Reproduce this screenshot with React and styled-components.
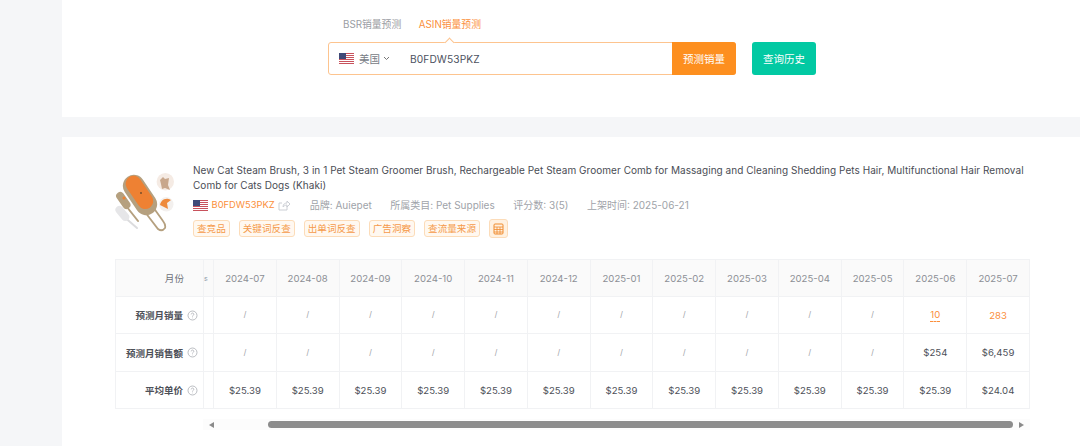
import React from "react";
import styled, { createGlobalStyle } from "styled-components";

const GlobalStyle = createGlobalStyle`
  html, body {
    margin: 0;
    padding: 0;
    background: #f5f6f8;
    overflow: hidden;
  }
  body {
    font-family: Inter, "Noto Sans CJK SC", sans-serif;
    -webkit-font-smoothing: antialiased;
  }
`;

const months = [
  "2024-07", "2024-08", "2024-09", "2024-10", "2024-11", "2024-12", "2025-01",
  "2025-02", "2025-03", "2025-04", "2025-05", "2025-06", "2025-07",
];

const rows = [
  { label: "预测月销量", cells: [...Array(11).fill("/"), "10", "283"] },
  { label: "预测月销售额", cells: [...Array(11).fill("/"), "$254", "$6,459"] },
  { label: "平均单价", cells: [...Array(12).fill("$25.39"), "$24.04"] },
];

const tags = ["查竞品", "关键词反查", "出单词反查", "广告洞察", "查流量来源"];

function Flag() {
  return (
    <svg width="15" height="11" viewBox="0 0 15 11">
      <rect width="15" height="11" fill="#fff" />
      {[0, 2, 4, 6, 8, 10].map((y) => (
        <rect key={y} y={y} width="15" height="1" fill="#c8525c" />
      ))}
      <rect width="7" height="6" fill="#3f4a78" />
    </svg>
  );
}

function BrushPicture() {
  return (
    <svg width="60" height="62" viewBox="0 0 60 62">
      <circle cx="50.3" cy="10.7" r="8.7" fill="#f5ebe4" />
      <path d="M45 9l3-3 2 2 4-1-1 7 2 5-5-2-3 1-1-5z" fill="#c8a78c" />
      <circle cx="51.3" cy="33.3" r="7.2" fill="#f3f0ee" />
      <path d="M45 34a7 7 0 0 1 11-5l-4 3 1 6-4-2z" fill="#ee8a3c" />
      <path d="M30 41L43 58Q47 61 50 57Q51 54 48 50L38 36" stroke="#b5a07f" strokeWidth="1.8" fill="none" />
      <rect x="14" y="2" width="22" height="44" rx="11" fill="#b5a07f" transform="rotate(-34 25 24)" />
      <rect x="18" y="3" width="16" height="37" rx="8" fill="#ee8133" transform="rotate(-34 25 24)" />
      <circle cx="26" cy="22" r="0.9" fill="#6b4a2a" />
      <path d="M8 31L23 50" stroke="#b5a07f" strokeWidth="2" strokeLinecap="round" />
      <rect x="4" y="20" width="8" height="19" rx="4" fill="#b5a07f" transform="rotate(-35 8 29)" />
      <circle cx="9" cy="27" r="1.5" fill="#ee8133" />
      <path d="M7 44L22 57" stroke="#dcdcde" strokeWidth="2" strokeLinecap="round" />
      <rect x="3" y="34" width="8" height="17" rx="4" fill="#e6e6e8" transform="rotate(-40 7 42)" />
    </svg>
  );
}

function HelpIcon() {
  return (
    <HelpMark viewBox="0 0 12 12">
      <circle cx="6" cy="6" r="4.9" fill="none" stroke="#a3a6ad" strokeWidth="0.8" />
      <path d="M4.6 4.8a1.4 1.4 0 1 1 2.2 1.1c-.5.4-.8.6-.8 1.2" fill="none" stroke="#a3a6ad" strokeWidth="0.8" />
      <circle cx="6" cy="8.6" r="0.5" fill="#a3a6ad" />
    </HelpMark>
  );
}

export default function App() {
  return (
    <Page>
      <GlobalStyle />
      <SearchCard>
        <Tabs>
          <Tab>BSR销量预测</Tab>
          <Tab $active>ASIN销量预测</Tab>
        </Tabs>
        <SearchRow>
          <SearchBox>
            <Country>
              <Flag />
              <span>美国</span>
              <svg width="7" height="5" viewBox="0 0 7 5">
                <path d="M1 1l2.5 2.5L6 1" fill="none" stroke="#777" strokeWidth="1" />
              </svg>
            </Country>
            <AsinText>B0FDW53PKZ</AsinText>
            <PredictButton>预测销量</PredictButton>
          </SearchBox>
          <HistoryButton>查询历史</HistoryButton>
        </SearchRow>
      </SearchCard>

      <ResultCard>
        <Product>
          <BrushPicture />
          <ProductInfo>
            <Title>
              New Cat Steam Brush, 3 in 1 Pet Steam Groomer Brush, Rechargeable Pet Steam Groomer Comb for Massaging and Cleaning Shedding Pets Hair, Multifunctional Hair Removal Comb for Cats Dogs (Khaki)
            </Title>
            <Meta>
              <AsinGroup>
                <Flag />
                <AsinLink>B0FDW53PKZ</AsinLink>
                <svg width="12" height="11" viewBox="0 0 12 11">
                  <path d="M9 6v4H1V3h3M5 7c0-3 2-4 4-4V1l3 3-3 3V5C7 5 6 6 5 7z" fill="none" stroke="#c6cad0" strokeWidth="0.9" />
                </svg>
              </AsinGroup>
              <span>品牌: Auiepet</span>
              <span>所属类目: Pet Supplies</span>
              <span>评分数: 3(5)</span>
              <span>上架时间: 2025-06-21</span>
            </Meta>
            <TagRow>
              {tags.map((t) => (
                <Tag key={t}>{t}</Tag>
              ))}
              <CalcTag>
                <svg width="11" height="12" viewBox="0 0 11 12">
                  <rect x="1" y="1" width="9" height="10" rx="1" fill="none" stroke="#f08c2e" strokeWidth="1" />
                  <path d="M1 4h9M1 6.5h9M1 9h9M4 4v7M7 4v7" stroke="#f08c2e" strokeWidth="0.8" />
                </svg>
              </CalcTag>
            </TagRow>
          </ProductInfo>
        </Product>

        <Table>
          <HeadCell $label>月份</HeadCell>
          <HeadCell $sliver>
            <CutText>s</CutText>
          </HeadCell>
          {months.map((m) => (
            <HeadCell key={m}>{m}</HeadCell>
          ))}
          {rows.map((row) => (
            <React.Fragment key={row.label}>
              <RowLabel>
                {row.label}
                <HelpIcon />
              </RowLabel>
              <Cell $sliver />
              {row.cells.map((c, i) => (
                <Cell key={i} $empty={c === "/"} $hot={row.label === "预测月销量" && c !== "/"}>
                  {c === "10" ? <Dashed>{c}</Dashed> : c}
                </Cell>
              ))}
            </React.Fragment>
          ))}
        </Table>

        <ScrollBar>
          <Arrow $left />
          <Thumb />
          <Arrow />
        </ScrollBar>
      </ResultCard>
    </Page>
  );
}

const Page = styled.div`
  display: flex;
  flex-direction: column;
  gap: 20px;
  height: 446px;
  padding-left: 62px;
  box-sizing: border-box;
  overflow: hidden;
`;

const SearchCard = styled.section`
  background: #fff;
  height: 117px;
  flex: none;
  display: flex;
  flex-direction: column;
  align-items: center;
  box-sizing: border-box;
  padding: 18px 0 0 2px;
`;

const Tabs = styled.div`
  display: flex;
  gap: 17.5px;
  width: 488px;
  padding-left: 15px;
  box-sizing: border-box;
  height: 24px;
`;

const Tab = styled.div`
  font-size: 9.8px;
  line-height: 13px;
  color: ${(p) => (p.$active ? "#fb8f3c" : "#9a9da3")};
`;

const SearchRow = styled.div`
  display: flex;
  gap: 16px;
  width: 488px;
`;

const SearchBox = styled.div`
  position: relative;
  display: flex;
  align-items: center;
  width: 408px;
  height: 33px;
  box-sizing: border-box;
  border: 1px solid #fdc48f;
  border-radius: 3px;
  background: #fff;

  &::before {
    content: "";
    position: absolute;
    top: -4px;
    left: 117px;
    width: 6px;
    height: 6px;
    background: #fff;
    border-left: 1px solid #fdc48f;
    border-top: 1px solid #fdc48f;
    transform: rotate(45deg);
  }
`;

const Country = styled.div`
  display: flex;
  align-items: center;
  gap: 5px;
  width: 81px;
  padding-left: 10px;
  box-sizing: border-box;
  font-size: 10.5px;
  color: #777b84;
  flex: none;

  svg:last-child {
    margin-left: -2px;
  }
`;

const AsinText = styled.div`
  flex: 1;
  font-size: 10.2px;
  color: #4c5160;
  letter-spacing: 0.1px;
`;

const PredictButton = styled.button`
  width: 64px;
  height: 33px;
  margin: -1px -1px -1px 0;
  border: 0;
  padding: 0;
  border-radius: 0 3px 3px 0;
  background: #fd8f1f;
  color: #fff;
  font: inherit;
  font-size: 10.5px;
`;

const HistoryButton = styled.button`
  width: 64px;
  height: 33px;
  border: 0;
  padding: 0;
  border-radius: 3px;
  background: #02c9a3;
  color: #fff;
  font: inherit;
  font-size: 10.5px;
`;

const ResultCard = styled.section`
  flex: 1;
  background: #fff;
  padding: 26px 50px 0 53px;
  min-height: 0;
`;

const Product = styled.div`
  display: flex;
  gap: 18px;
  height: 96px;
  box-sizing: border-box;
  padding-top: 2px;

  > svg {
    flex: none;
    margin-top: 6px;
  }
`;

const ProductInfo = styled.div`
  min-width: 0;
  margin-top: -2px;
`;

const Title = styled.div`
  font-size: 10px;
  line-height: 15px;
  color: #4a4d55;
  letter-spacing: 0.04px;
`;

const Meta = styled.div`
  display: flex;
  align-items: center;
  gap: 18.5px;
  margin-top: 5px;
  font-size: 10px;
  line-height: 14px;
  color: #a0a3a9;
`;

const AsinGroup = styled.div`
  display: flex;
  align-items: center;
  gap: 3.5px;
  margin-right: 1px;
`;

const AsinLink = styled.span`
  color: #fb8f3c;
  font-size: 9.4px;
`;

const TagRow = styled.div`
  display: flex;
  align-items: center;
  gap: 9px;
  margin-top: 7px;
`;

const Tag = styled.span`
  display: inline-flex;
  align-items: center;
  height: 15px;
  padding: 0 3px;
  border: 1px solid #fcdcb9;
  border-radius: 3px;
  background: #fff8f0;
  color: #f59a4a;
  font-size: 9.6px;
  line-height: 1;
`;

const CalcTag = styled(Tag)`
  height: 17px;
  padding: 0 3px;
  justify-content: center;
  background: #fff1e0;
`;

const Table = styled.div`
  display: grid;
  grid-template-columns: 88px 10px repeat(13, 1fr);
  grid-template-rows: 37px 37px 38px 37px;
  border-top: 1px solid #f1f2f4;
  border-left: 1px solid #f1f2f4;
  width: 915px;
  box-sizing: border-box;
`;

const HeadCell = styled.div`
  display: flex;
  align-items: center;
  justify-content: ${(p) => (p.$label ? "flex-end" : p.$sliver ? "flex-start" : "center")};
  padding-right: ${(p) => (p.$label ? "19px" : "0")};
  background: #fafafa;
  border-right: 1px solid #f1f2f4;
  border-bottom: 1px solid #f1f2f4;
  font-size: 9.6px;
  color: ${(p) => (p.$label ? "#6d7078" : "#8d9096")};
  overflow: hidden;
`;

const CutText = styled.span`
  color: #8a9aa8;
  font-size: 7px;
`;

const RowLabel = styled.div`
  display: flex;
  align-items: center;
  justify-content: flex-end;
  gap: 4px;
  padding-right: 5px;
  border-right: 1px solid #f1f2f4;
  border-bottom: 1px solid #f1f2f4;
  font-size: 9.5px;
  font-weight: 700;
  color: #4e5159;
`;

const HelpMark = styled.svg`
  width: 11px;
  height: 11px;
  flex: none;
`;

const Cell = styled.div`
  display: flex;
  align-items: center;
  justify-content: center;
  border-right: 1px solid #f1f2f4;
  border-bottom: 1px solid #f1f2f4;
  font-size: ${(p) => (p.$empty ? "9px" : "9.6px")};
  font-family: ${(p) => (p.$empty ? '"Liberation Sans", sans-serif' : "inherit")};
  color: ${(p) => (p.$hot ? "#fb8f3c" : p.$empty ? "#a6a9ae" : "#4e5159")};
`;

const Dashed = styled.span`
  border-bottom: 1px dashed #fb8f3c;
  padding-bottom: 1px;
`;

const ScrollBar = styled.div`
  display: flex;
  align-items: center;
  height: 11px;
  margin-top: 10px;
  margin-left: 88px;
  background: #fcfcfc;
`;

const Arrow = styled.span`
  width: 0;
  height: 0;
  flex: none;
  margin: ${(p) => (p.$left ? "0 54px 0 6px" : "0 6px 0 6px")};
  border-top: 3.5px solid transparent;
  border-bottom: 3.5px solid transparent;
  border-${(p) => (p.$left ? "right" : "left")}: 5px solid #8a8a8a;
`;

const Thumb = styled.div`
  flex: 1;
  height: 7px;
  border-radius: 4px;
  background: #8c8c8c;
`;
